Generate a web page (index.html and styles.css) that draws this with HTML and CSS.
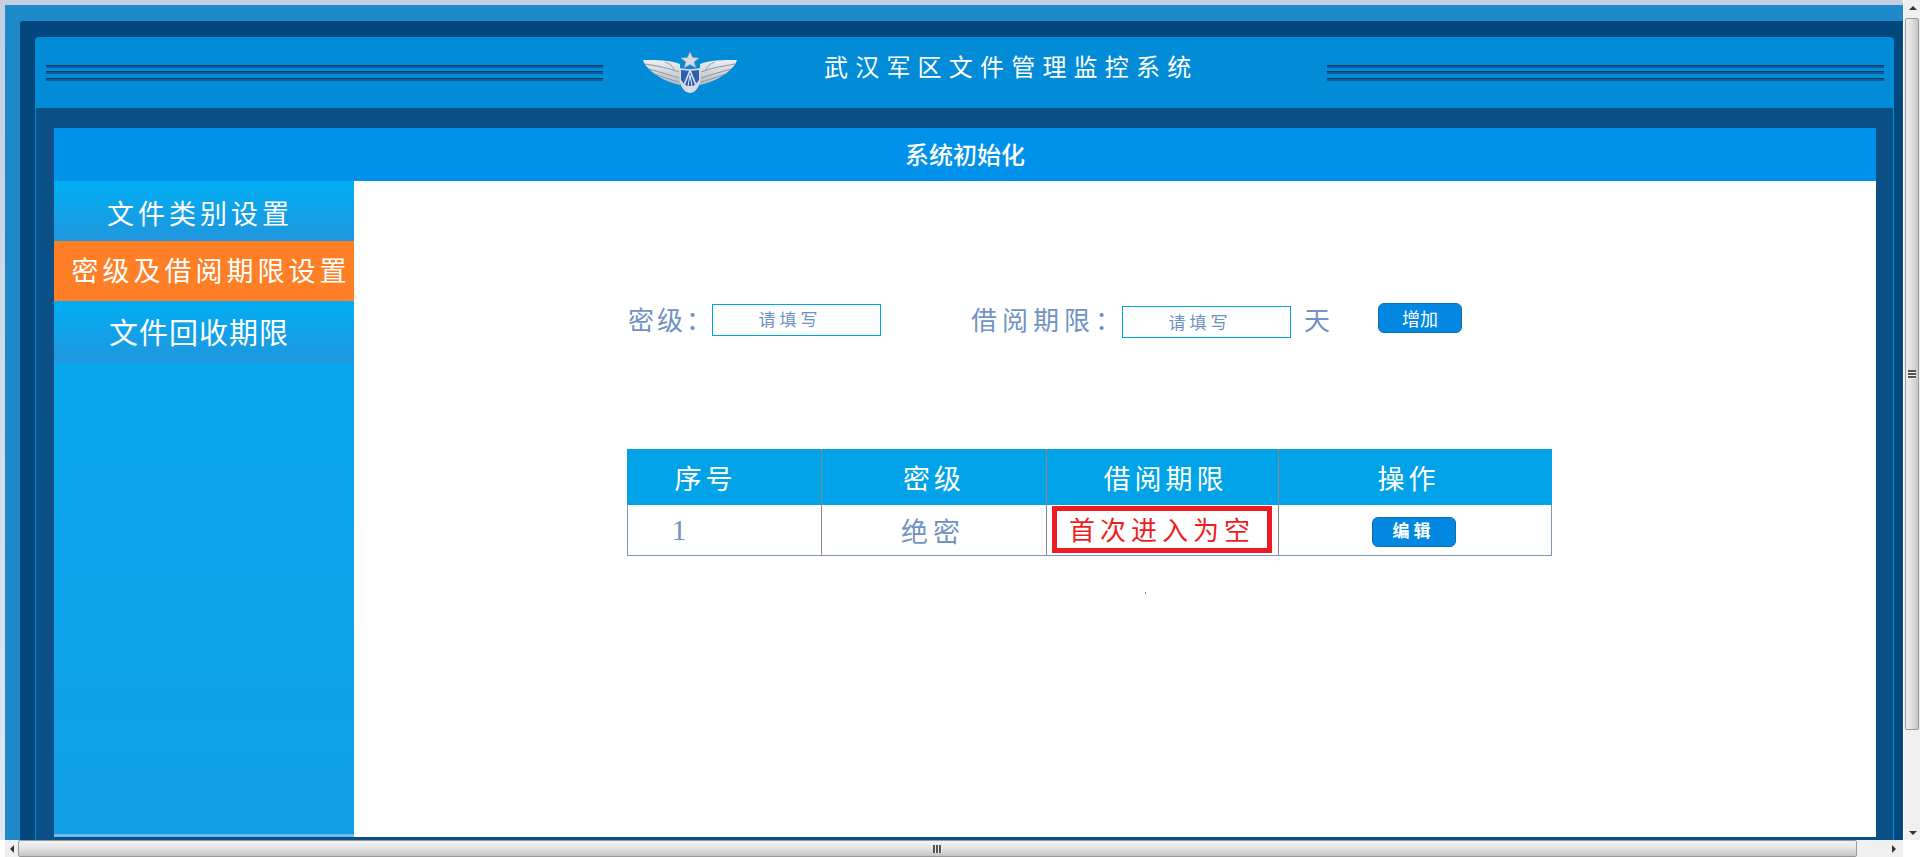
FILE: index.html
```html
<!DOCTYPE html>
<html lang="zh-CN">
<head>
<meta charset="utf-8">
<title>武汉军区文件管理监控系统</title>
<link rel="stylesheet" href="styles.css">
</head>
<body>
<div class="viewport">
  <div class="outer">
    <div class="shell">
      <div class="panel">
        <header class="header">
          <div class="rules rules-left"><i></i><i></i><i></i></div>
          <svg class="logo" width="94" height="41" viewBox="0 0 94 41" aria-hidden="true">
            <defs>
              <linearGradient id="silver" x1="0" y1="0" x2="0" y2="1">
                <stop offset="0" stop-color="#eef0f2"/>
                <stop offset="1" stop-color="#b4bbc2"/>
              </linearGradient>
            </defs>
            <g>
              <path d="M0 8 C13 8 28 8 37 12 L37 33 C27 31 14 25 7 18 C4 15 1 12 0 8Z" fill="url(#silver)"/>
              <path d="M2 12 C14 14 26 16 36 20M6 17 C16 20 27 23 36 26M12 22 C20 25 28 28 36 30M22 10 C27 12 30 14 31 18" fill="none" stroke="#8d98a2" stroke-width="1"/>
            </g>
            <g>
              <path d="M94 8 C81 8 66 8 57 12 L57 33 C67 31 80 25 87 18 C90 15 93 12 94 8Z" fill="url(#silver)"/>
              <path d="M92 12 C80 14 68 16 58 20M88 17 C78 20 67 23 58 26M82 22 C74 25 66 28 58 30M72 10 C67 12 64 14 63 18" fill="none" stroke="#8d98a2" stroke-width="1"/>
            </g>
            <path d="M47 0 L49.6 5.6 L56 6 L51 10 L52.8 15.8 L47 12.5 L41.2 15.8 L43 10 L38 6 L44.4 5.6Z" fill="#d6dade" stroke="#9aa4ad" stroke-width=".5"/>
            <path d="M36.5 16 C43 17.5 51 17.5 57.5 16 L57 31 C55 37 51 41 47 41 C43 41 39 37 37 31Z" fill="#d9dde1"/>
            <path d="M38 18 C44 19 50 19 56 18 L56 28 C54 31 52 33 50 34 L44 34 C42 33 40 31 38 28Z" fill="#2a5fb5"/>
            <path d="M47 18.5 L41.5 32 M47 18.5 L52.5 32" fill="none" stroke="#e4e8ec" stroke-width="1.6"/>
            <path d="M47 23 L45 34 M47 23 L49 34" fill="none" stroke="#e4e8ec" stroke-width="1"/>
          </svg>
          <h1 class="site-title">武汉军区文件管理监控系统</h1>
          <div class="rules rules-right"><i></i><i></i><i></i></div>
        </header>
        <div class="workspace">
          <div class="title-bar">系统初始化</div>
          <div class="columns">
            <nav class="sidebar">
              <a class="nav-item nav-first">文件类别设置</a>
              <a class="nav-item nav-active">密级及借阅期限设置</a>
              <a class="nav-item nav-last">文件回收期限</a>
            </nav>
            <main class="main">
              <form class="add-form">
                <label class="field-label label-level">密级：</label>
                <input class="field-input input-level" placeholder="请填写">
                <label class="field-label label-term">借阅期限：</label>
                <input class="field-input input-term" placeholder="请填写">
                <span class="unit">天</span>
                <button type="button" class="btn btn-add">增加</button>
              </form>
              <table class="grid">
                <colgroup>
                  <col class="col-a"><col class="col-b"><col class="col-c"><col class="col-d">
                </colgroup>
                <thead>
                  <tr>
                    <th class="head-index">序号</th>
                    <th>密级</th>
                    <th class="head-term">借阅期限</th>
                    <th class="head-action">操作</th>
                  </tr>
                </thead>
                <tbody>
                  <tr>
                    <td class="cell-num">1</td>
                    <td class="cell-level">绝密</td>
                    <td class="cell-term"><div class="empty-note">首次进入为空</div></td>
                    <td class="cell-action"><button type="button" class="btn btn-edit">编辑</button></td>
                  </tr>
                </tbody>
              </table>
              <div class="speck"></div>
            </main>
          </div>
        </div>
      </div>
    </div>
  </div>
  <div class="vbar">
    <div class="arrow arrow-up"></div>
    <div class="vthumb"><div class="grip grip-v"></div></div>
    <div class="arrow arrow-down"></div>
  </div>
  <div class="hbar">
    <div class="arrow arrow-left"></div>
    <div class="hthumb"><div class="grip grip-h"></div></div>
    <div class="arrow arrow-right"></div>
  </div>
  <div class="corner"></div>
</div>
</body>
</html>
```

FILE: styles.css
```css
* { box-sizing: border-box; }
html, body { margin: 0; padding: 0; height: 100%; overflow: hidden; }
body {
  font-family: "Liberation Serif", "Noto Sans CJK SC", serif;
  background: #fff;
}
.viewport {
  display: grid;
  grid-template-columns: 1903px 17px;
  grid-template-rows: 840px 17px;
  width: 1920px;
  height: 857px;
}

/* nested frames */
.outer {
  padding: 5px 0 0 5px;
  background: linear-gradient(#c5cfe0, #dfe8f4);
}
.shell {
  height: 100%;
  padding: 16px 0 0 15px;
  background: #1e8ac9;
}
.panel {
  display: flex;
  flex-direction: column;
  height: 100%;
  padding: 16px 9px 0 15px;
  background: #03477f;
  border-top-left-radius: 3px;
}
.header {
  display: flex;
  align-items: center;
  flex: 0 0 71px;
  margin: 0;
  background: #028bd7;
  border-radius: 4px 4px 0 0;
}

.rules {
  display: flex;
  flex-direction: column;
  gap: 3px;
  width: 557px;
  height: 16px;
}
.rules i {
  display: block;
  height: 3px;
  background: #0b5c95;
  border-top: 1px solid #003a6b;
}
.rules i:last-child { margin-top: 1px; }
.rules-left { margin-left: 11px; }
.rules-right { margin-left: 134px; }
.logo { margin-left: 40px; flex: none; }
.site-title {
  margin: 0 0 10px 87px;
  width: 369px;
  flex: none;
  font-size: 24px;
  font-weight: 400;
  line-height: 34px;
  letter-spacing: 7.2px;
  white-space: nowrap;
  color: #fff;
}

.workspace {
  display: flex;
  flex-direction: column;
  flex: 1;
  min-height: 0;
  padding: 20px 17px 3px 18px;
  background: #0a4f85;
  border-left: 1px solid #028bd7;
  border-right: 1px solid #028bd7;
}
.title-bar {
  flex: 0 0 53px;
  font-family: "Noto Sans CJK SC", sans-serif;
  font-size: 24px;
  font-weight: 500;
  line-height: 51px;
  text-align: center;
  color: #fff;
  background: #0092ea;
}
.columns { display: flex; flex: 1; min-height: 0; }

/* sidebar */
.sidebar {
  flex: 0 0 300px;
  background: linear-gradient(#03aaf0, #129fe6);
  border-bottom: 3px solid #6bbdec;
}
.nav-item {
  display: block;
  height: 60px;
  font-size: 27px;
  letter-spacing: 4px;
  text-align: center;
  white-space: nowrap;
  color: #fff;
  background: linear-gradient(#00aef3, #2196dd);
}
.nav-first { padding-right: 8px; line-height: 69px; }
.nav-active { background: #ff7f27; padding-left: 14px; line-height: 62px; }
.nav-last {
  height: 62px;
  padding-right: 10px;
  font-size: 29px;
  line-height: 66px;
  letter-spacing: 1px;
}

/* main */
.main {
  flex: 1;
  min-width: 0;
  padding: 122px 0 0 273px;
  background: #fff;
}
.add-form {
  display: flex;
  align-items: flex-start;
  height: 36px;
  margin: 0 0 110px 1px;
}
.field-label {
  flex: none;
  margin-top: 2px;
  font-size: 26px;
  line-height: 34px;
  white-space: nowrap;
  color: #7093c3;
}
.label-level { width: 84px; letter-spacing: 3px; }
.label-term { width: 151px; margin-left: 90px; letter-spacing: 5px; }
.field-input {
  flex: none;
  width: 169px;
  height: 32px;
  padding: 2px 13px 0 0;
  border: 1.5px solid #00a4e8;
  background: #fff;
  font-family: inherit;
  font-size: 17px;
  letter-spacing: 4px;
  text-align: center;
  outline: none;
}
.field-input::placeholder { color: #6f8fbf; opacity: 1; }
.input-level { margin-top: 1px; }
.input-term { margin-top: 3px; padding-top: 3px; }
.unit {
  flex: none;
  width: 74px;
  margin: 2px 0 0 13px;
  font-size: 26px;
  line-height: 34px;
  color: #7093c3;
}

.btn {
  flex: none;
  padding: 0;
  font-family: "Noto Sans CJK SC", sans-serif;
  color: #fff;
  background: #0288e0;
  border: 1px solid #0b6fb8;
  border-radius: 6px;
}
.btn-add { width: 84px; height: 30px; font-size: 18px; line-height: 26px; }
.btn-edit {
  display: block;
  width: 84px;
  height: 30px;
  margin: 0 auto;
  font-family: inherit;
  font-size: 17px;
  font-weight: 700;
  line-height: 26px;
  letter-spacing: 4px;
}

/* table */
.grid {
  width: 925px;
  table-layout: fixed;
  border-collapse: separate;
  border-spacing: 0;
}
.col-a { width: 195px; }
.col-b { width: 225px; }
.col-c { width: 232px; }
.col-d { width: 273px; }
.grid th {
  height: 56px;
  padding: 0;
  font-size: 27px;
  font-weight: 400;
  letter-spacing: 4px;
  text-align: center;
  color: #fff;
  background: #00a3e8;
  border-right: 1px solid #888;
}
.grid th:last-child { border-right: 0; }
.grid th.head-index { padding-right: 37px; }
.grid th.head-term { padding-left: 6px; }
.grid th.head-action { padding-right: 14px; }
.grid td {
  height: 51px;
  padding: 0;
  font-size: 27px;
  letter-spacing: 5px;
  text-align: center;
  color: #7093c3;
  border-right: 1px solid #888;
  border-bottom: 1px solid #7b93bd;
}
.grid td:first-child { border-left: 1px solid #7b93bd; }
.grid td:last-child { border-right: 1px solid #7b93bd; }
.grid .cell-num { padding-right: 91px; font-size: 30px; letter-spacing: 0; }
.grid .cell-level { padding-right: 2px; }
.grid .cell-term { padding: 1px 6px 2px 5px; vertical-align: top; }
.grid .cell-action { padding: 4px 3px 0 0; }
.empty-note {
  height: 47px;
  font-size: 26px;
  line-height: 41px;
  letter-spacing: 5px;
  color: #f01c24;
  border: 5px solid #ed1c24;
}
.speck {
  width: 1px;
  height: 2px;
  margin: 36px 0 0 518px;
  background: #777;
}

/* scrollbars */
.vbar {
  display: flex;
  flex-direction: column;
  padding-left: 1px;
  background: #f0f0f0;
  border-left: 1px solid #fff;
}
.hbar {
  display: flex;
  align-items: stretch;
  margin-left: 5px;
  background: #f0f0f0;
}
.corner { background: #fff; }
.arrow { position: relative; flex: none; }
.arrow::after {
  content: "";
  position: absolute;
  left: 50%;
  top: 50%;
  border-style: solid;
  border-color: transparent;
}
.arrow-up, .arrow-down { height: 18px; }
.arrow-down { margin-top: auto; }
.arrow-left, .arrow-right { width: 13px; }
.arrow-right { flex: 0 0 46px; }
.arrow-up::after { margin: -3px 0 0 -4px; border-width: 0 4px 4px; border-bottom-color: #333; }
.arrow-down::after { margin: 0 0 0 -4px; border-width: 4px 4px 0; border-top-color: #333; }
.arrow-left::after { margin: -4px 0 0 -2px; border-width: 4px 4px 4px 0; border-right-color: #333; }
.arrow-right::after { margin: -4px 0 0 -3px; border-width: 4px 0 4px 4px; border-left-color: #333; left: 38px; }
.vthumb {
  display: flex;
  align-items: center;
  justify-content: center;
  flex: none;
  width: 14px;
  height: 712px;
  background: linear-gradient(90deg, #ececec, #e2e2e2 40%, #c6c6c6);
  border: 1px solid #999;
  border-radius: 2px;
}
.hthumb {
  display: flex;
  align-items: center;
  justify-content: center;
  flex: 1;
  background: linear-gradient(#f2f2f2, #e6e6e6 45%, #c4c4c4);
  border: 1px solid #999;
  border-radius: 2px;
}
.grip { flex: none; }
.grip-v {
  width: 8px;
  height: 9px;
  background: repeating-linear-gradient(#555 0 2px, #eee 2px 3px);
}
.grip-h {
  width: 9px;
  height: 8px;
  background: repeating-linear-gradient(90deg, #555 0 2px, #eee 2px 3px);
}
```
